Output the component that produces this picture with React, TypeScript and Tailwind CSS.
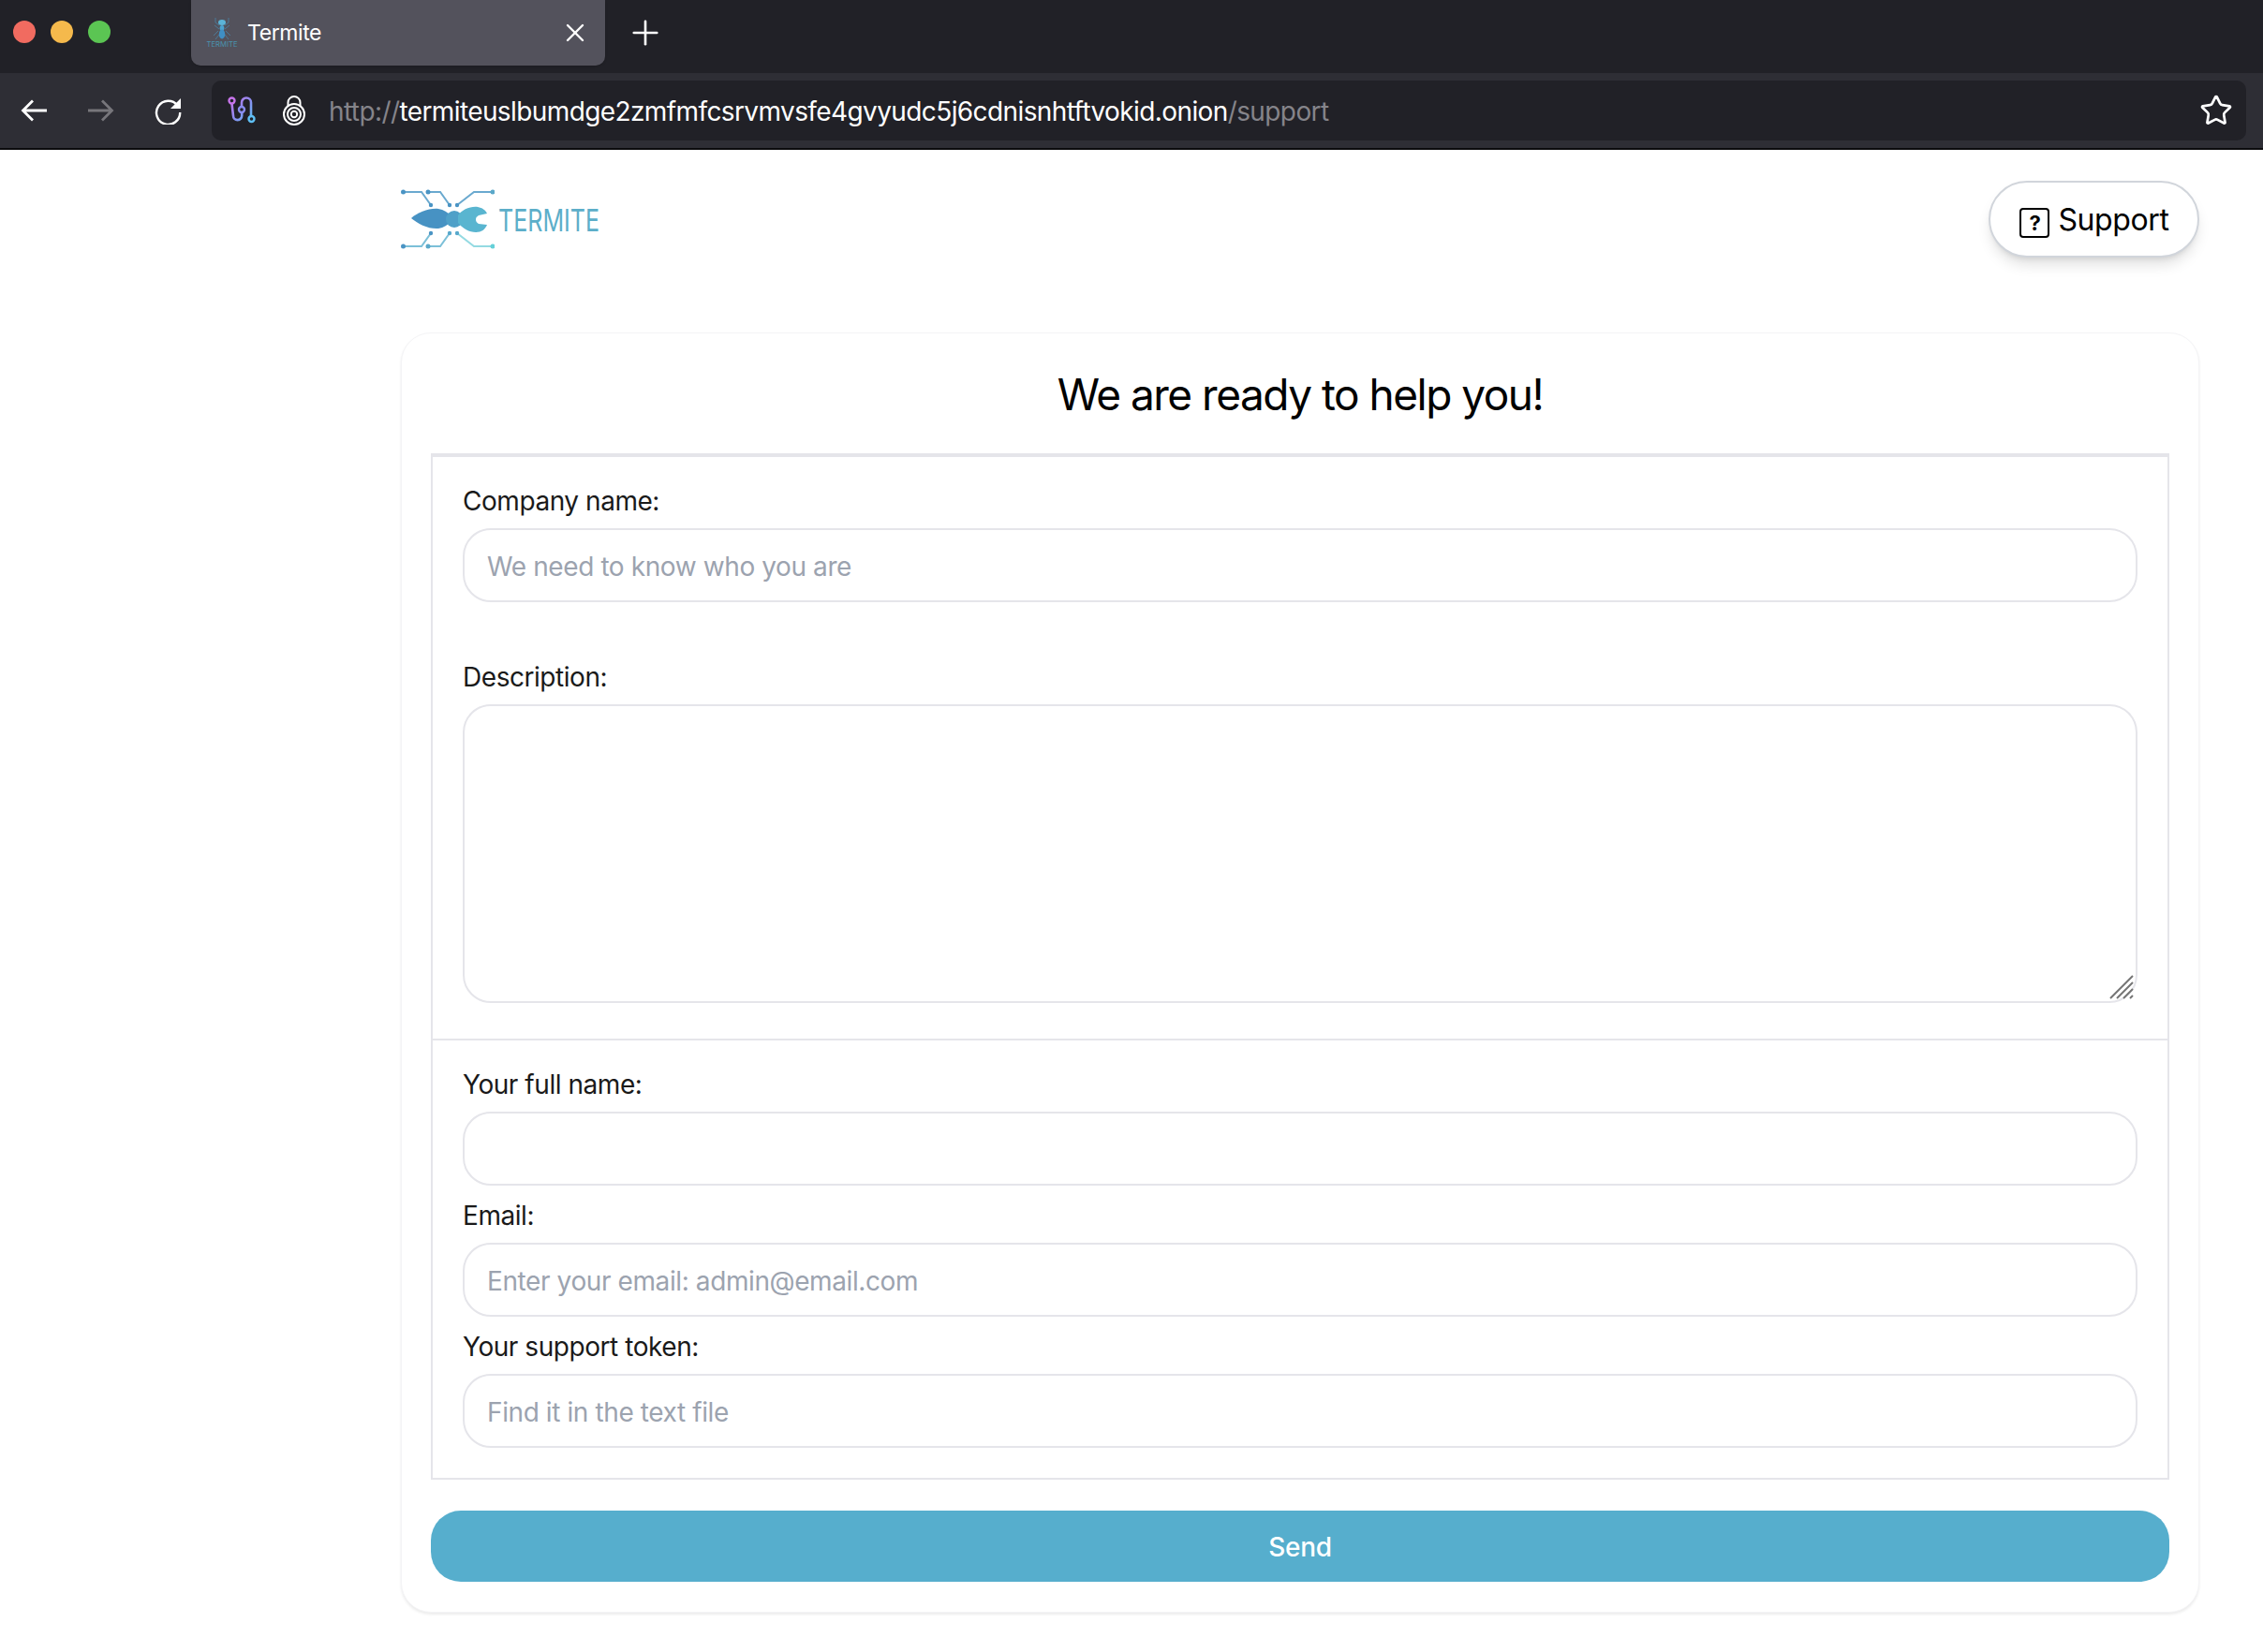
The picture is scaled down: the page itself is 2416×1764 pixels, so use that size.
import { Plus, X, Star } from 'lucide-react'

const sans = "font-['Inter',sans-serif]"

const Favicon = () => (
  <svg width="34" height="34" viewBox="0 0 34 34" fill="none">
    <g stroke="#4b86a8" strokeWidth="0.9" opacity="0.85">
      <path d="M10 1v5l4 3M24 1v5l-4 3M8 20l5-5M26 20l-5-5M10 24l4-5M24 24l-4-5M9 9l5 4M25 9l-5 4" />
    </g>
    <ellipse cx="17" cy="6" rx="4" ry="3" fill="#5bb4d8" />
    <ellipse cx="17" cy="12" rx="2.400" ry="3" fill="#4ba3cf" />
    <ellipse cx="17" cy="18.500" rx="3.200" ry="5" fill="#3f8fc4" />
    <text x="17" y="32" textAnchor="middle" fontSize="7.600" fontFamily="Inter, sans-serif" fill="#4a93ad" textLength="33" lengthAdjust="spacingAndGlyphs">
      TERMITE
    </text>
  </svg>
)

const Arrow = ({ dir, color }: { dir: 'left' | 'right'; color: string }) => (
  <svg width="28" height="24" viewBox="0 0 28 24" fill="none" stroke={color} strokeWidth="2.800" className={dir === 'right' ? 'rotate-180' : ''}>
    <path d="M28 12H3M13 1.500 2.500 12 13 22.500" />
  </svg>
)

const Reload = () => (
  <svg width="30" height="30" viewBox="0 0 30 30" fill="none">
    <path d="M24.500 9.500A12.600 12.600 0 1 0 27.200 17" stroke="#fff" strokeWidth="2.400" />
    <path d="M28 2v11H17z" fill="#fff" />
  </svg>
)

const TorCircuit = () => (
  <svg width="30" height="30" viewBox="0 0 30 30" fill="none">
    <defs>
      <linearGradient id="tor" x1="0" y1="0" x2="1" y2="1">
        <stop offset="0" stopColor="#c774ea" />
        <stop offset="0.550" stopColor="#8a8df0" />
        <stop offset="1" stopColor="#5fc0f5" />
      </linearGradient>
    </defs>
    <path d="M4.500 7.500l1.500 13a4.600 4.600 0 0 0 9.200 0V17.500M15 11.500V6.500a5 5 0 0 1 10 0V20.500" stroke="url(#tor)" strokeWidth="2.600" />
    <circle cx="4.500" cy="4.500" r="3" stroke="#c774ea" strokeWidth="2.400" />
    <circle cx="15" cy="14" r="3" stroke="#8a8df0" strokeWidth="2.400" />
    <circle cx="25.500" cy="24" r="3" stroke="#5fc0f5" strokeWidth="2.400" />
  </svg>
)

const OnionLock = () => (
  <svg width="24" height="32" viewBox="0 0 24 32" fill="none" stroke="#fff" strokeWidth="2">
    <path d="M5.500 11V7.500a6.500 6.500 0 0 1 13 0V11" />
    <circle cx="12" cy="20" r="11" />
    <circle cx="12" cy="20" r="7" />
    <circle cx="12" cy="20" r="3.200" />
  </svg>
)

const BrowserChrome = () => (
  <div className={`${sans} text-white`}>
    <div className="flex h-[78px] items-start bg-[#212127]">
      <div className="flex h-[68px] items-center pl-[14px]">
        <div className="flex gap-[16px]">
          <span className="size-[24px] rounded-full bg-[#f16b60]" />
          <span className="size-[24px] rounded-full bg-[#f5b94c]" />
          <span className="size-[24px] rounded-full bg-[#5bc553]" />
        </div>
      </div>
      <div className="ml-[86px] flex h-[70px] w-[442px] items-center rounded-b-[10px] bg-[#53525c] pl-[16px] pr-[16px] shadow-sm">
        <Favicon />
        <span className="ml-[10px] flex-1 text-[23px] leading-none tracking-[-0.4px]">Termite</span>
        <X size={32} strokeWidth={1.800} />
      </div>
      <div className="flex h-[70px] items-center pl-[22px]">
        <Plus size={42} strokeWidth={1.500} />
      </div>
    </div>
    <div className="flex h-[82px] items-start border-b-2 border-[#0b0b0d] bg-[#2e2e35] pt-[8px]">
      <div className="flex h-[64px] w-[226px] items-center pl-[22px]">
        <Arrow dir="left" color="#ffffff" />
        <span className="ml-[44px]">
          <Arrow dir="right" color="#77767b" />
        </span>
        <span className="ml-[43px]">
          <Reload />
        </span>
      </div>
      <div className="flex h-[64px] w-[2172px] items-center rounded-[10px] bg-[#212127] pl-[17px] pr-[14px]">
        <TorCircuit />
        <span className="ml-[29px]">
          <OnionLock />
        </span>
        <div className="ml-[25px] flex-1 whitespace-nowrap pt-[2px] text-[28px] leading-none tracking-[-0.6px] text-[#85848a]">
          http://<span className="text-white">termiteuslbumdge2zmfmfcsrvmvsfe4gvyudc5j6cdnisnhtftvokid.onion</span>/support
        </div>
        <Star size={36} strokeWidth={1.800} />
      </div>
    </div>
  </div>
)

const Logo = () => (
  <div className="flex items-center">
    <svg width="100" height="70" viewBox="0 0 100 70" fill="none">
      <g stroke="#6aa9cf" strokeWidth="2">
        <path d="M2 5H22L32 19M29 5H42L52 19" />
        <path d="M98 5H78L60 19" />
        <path d="M2 63H22L32 49M29 63H42L52 49" stroke="#7cc0d8" />
        <path d="M98 63H78L60 49" stroke="#94dae2" />
      </g>
      <g fill="#4a94c4">
        <circle cx="2.500" cy="5" r="2.500" />
        <circle cx="29" cy="5" r="2.500" />
        <circle cx="98" cy="5" r="2.500" fill="#5aa8c9" />
        <circle cx="32" cy="19" r="2.200" />
        <circle cx="52" cy="19" r="2.200" />
        <circle cx="60" cy="19" r="2.200" />
        <circle cx="32" cy="49" r="2.200" />
        <circle cx="52" cy="49" r="2.200" fill="#58a8cc" />
        <circle cx="60" cy="49" r="2.200" fill="#58a8cc" />
        <circle cx="2.500" cy="63" r="2.500" />
        <circle cx="29" cy="63" r="2.500" fill="#5aa8c9" />
        <circle cx="98" cy="63" r="2.500" fill="#65d0d8" />
      </g>
      <path d="M11 33C18 27 30 22 40 23C46 24 50 27 53 30V37C50 40 46 43 40 44C30 45 18 39 11 33Z" fill="#4792c3" />
      <circle cx="57" cy="34" r="9" fill="#4fa0c8" />
      <path d="M61 30C65 24 74 20 82 21C87 22 90 24 92 28L83 30C79 32 79 37 83 39L92 40C90 45 86 48 80 48C73 48 66 44 61 38Z" fill="#59b5d0" />
    </svg>
    <span className="ml-[4px] w-[110px] origin-left scale-x-[0.76] whitespace-nowrap text-[33px] leading-none text-[#5caec9]">
      TERMITE
    </span>
  </div>
)

const QuestionBox = () => (
  <span className="ml-[1px] mt-[5px] flex size-[32px] items-center justify-center rounded-[4px] border-2 border-black text-[22px] font-bold leading-none">
    ?
  </span>
)

const labelCls = 'block h-[40px] pt-[1px] text-[28px] leading-[40px] tracking-[-0.45px] text-[#1a1a1a]'
const fieldCls =
  'block w-full rounded-[30px] border-2 border-[#e5e5ea] bg-white pl-[24px] text-[28px] tracking-[-0.4px] outline-none placeholder:text-[#9ca3af]'

const Field = ({ label, placeholder }: { label: string; placeholder?: string }) => (
  <div>
    <label className={labelCls}>{label}</label>
    <input className={`mt-[10px] h-[79px] pt-[2px] ${fieldCls}`} placeholder={placeholder} />
  </div>
)

export default function App() {
  return (
    <div className={`${sans} h-[1764px] overflow-hidden bg-white`}>
      <BrowserChrome />
      <header className="flex h-[195px] items-start justify-between pl-[428px] pr-[68px] pt-[33px]">
        <div className="mt-[7px]">
          <Logo />
        </div>
        <button className="flex h-[82px] w-[225px] items-center justify-center gap-[9px] rounded-full border-2 border-[#d1d5db] bg-white pt-[2px] text-[32px] tracking-[-0.4px] text-black shadow-[0_10px_15px_-3px_rgba(0,0,0,0.13),0_4px_6px_-4px_rgba(0,0,0,0.13)]">
          <QuestionBox />
          Support
        </button>
      </header>

      <main className="ml-[428px] w-[1920px] rounded-[32px] border border-[#f4f4f6] bg-white px-[31px] pb-[32px] shadow-[0_2px_3px_rgba(0,0,0,0.08)]">
        <h1 className="flex h-[128px] items-center justify-center pt-[2px] text-[46px] tracking-[-1.500px] text-black">
          We are ready to help you!
        </h1>
        <div className="border-x-2 border-b-2 border-t-4 border-[#e5e5ea]">
          <div className="border-b-2 border-[#e5e5ea] px-[32px] pb-[38px] pt-[26px]">
            <Field label="Company name:" placeholder="We need to know who you are" />
            <label className={`mt-[59px] ${labelCls}`}>Description:</label>
            <div className="relative mt-[10px]">
              <textarea className={`h-[319px] resize-none ${fieldCls}`} />
              <svg width="26" height="26" viewBox="0 0 26 26" className="absolute bottom-[4px] right-[4px]" stroke="#757575" strokeWidth="2">
                <path d="M1 25 25 1M8 25 25 8M15 25 25 15M22 25l3-3" />
              </svg>
            </div>
          </div>
          <div className="flex flex-col gap-[11px] px-[32px] pb-[32px] pt-[26px]">
            <Field label="Your full name:" />
            <Field label="Email:" placeholder="Enter your email: admin@email.com" />
            <Field label="Your support token:" placeholder="Find it in the text file" />
          </div>
        </div>
        <button className="mt-[33px] block h-[76px] w-full rounded-[32px] bg-[#56aecd] pt-[1px] text-[28px] font-medium tracking-[-0.3px] text-white">
          Send
        </button>
      </main>
    </div>
  )
}
